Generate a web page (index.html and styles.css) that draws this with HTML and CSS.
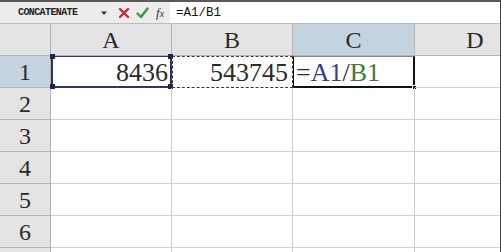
FILE: index.html
```html
<!DOCTYPE html>
<html>
<head>
<meta charset="utf-8">
<link rel="stylesheet" href="styles.css">
</head>
<body>
<div class="app">
  <div class="fbar">
    <div class="namebox">CONCATENATE</div>
    <div class="tools">
      <svg class="ico drop" width="8" height="6" viewBox="0 0 8 6"><path d="M1 1.5h6L4 5z" fill="#333"/></svg>
      <svg class="ico" width="12" height="12" viewBox="0 0 12 12"><path d="M2 2L10 10M10 2L2 10" stroke="#c8282d" stroke-width="2.4" stroke-linecap="round"/></svg>
      <svg class="ico" width="13" height="12" viewBox="0 0 13 12"><path d="M1.5 6.5L5 10L11.5 1.5" fill="none" stroke="#3a9a3a" stroke-width="2.4" stroke-linecap="round" stroke-linejoin="round"/></svg>
      <span class="fx">f<span class="x">x</span></span>
    </div>
    <div class="input">=A1/B1</div>
  </div>
  <div class="grid">
    <div class="corner"></div>
    <div class="ch">A</div>
    <div class="ch">B</div>
    <div class="ch sel">C</div>
    <div class="ch">D</div>

    <div class="rh sel">1</div>
    <div class="cell num refa">8436<i class="h tl"></i><i class="h tr"></i><i class="h bl"></i><i class="h br"></i></div>
    <div class="cell num refb">543745</div>
    <div class="cell active"><span class="tx">=</span><span class="ra">A1</span><span class="tx">/</span><span class="rb">B1</span><i class="fill"></i></div>
    <div class="cell"></div>

    <div class="rh">2</div><div class="cell"></div><div class="cell"></div><div class="cell"></div><div class="cell"></div>
    <div class="rh">3</div><div class="cell"></div><div class="cell"></div><div class="cell"></div><div class="cell"></div>
    <div class="rh">4</div><div class="cell"></div><div class="cell"></div><div class="cell"></div><div class="cell"></div>
    <div class="rh">5</div><div class="cell"></div><div class="cell"></div><div class="cell"></div><div class="cell"></div>
    <div class="rh">6</div><div class="cell"></div><div class="cell"></div><div class="cell"></div><div class="cell"></div>
    <div class="rh"></div><div class="cell"></div><div class="cell"></div><div class="cell"></div><div class="cell"></div>
  </div>
</div>
</body>
</html>
```
FILE: styles.css
```css
* { box-sizing: border-box; }
html, body { margin: 0; padding: 0; background: #fff; }
body { width: 501px; height: 252px; overflow: hidden; }
.app {
  width: 501px; height: 252px; overflow: hidden;
  border-right: 1px solid #444;
}
.fbar {
  height: 24px;
  display: flex;
  align-items: stretch;
  background: #ececec;
  border-top: 2px solid #5a5a5a;
  border-bottom: 1px solid #bdbdbd;
}
.namebox {
  width: 96px;
  padding-left: 18px;
  font-family: "Liberation Mono", monospace;
  font-size: 10px;
  font-weight: bold;
  letter-spacing: -0.6px;
  color: #222;
  display: flex; align-items: center;
}
.tools {
  width: 74px;
  display: flex; align-items: center;
  gap: 6px;
  padding-left: 4px;
}
.ico { display: block; }
.drop { margin-right: 4px; }
.fx {
  font-family: "Liberation Serif", serif;
  font-style: italic;
  font-size: 13px;
  color: #333;
  margin-left: 1px;
}
.fx .x { font-size: 10px; }
.input {
  flex: 1;
  background: #fff;
  font-family: "Liberation Mono", monospace;
  font-size: 12.5px;
  color: #111;
  padding-left: 6px;
  display: flex; align-items: center;
}
.grid {
  display: grid;
  grid-template-columns: 51px 121px 121px 122px 121px;
  grid-template-rows: repeat(7, 32px) 8px;
  font-family: "Liberation Serif", serif;
}
.corner, .ch, .rh {
  background: #e4e4e4;
  border-right: 1px solid #b4b4b4;
  border-bottom: 1px solid #b4b4b4;
  color: #2a2a2a;
  display: flex; align-items: center; justify-content: center;
  font-size: 24px;
  padding-top: 2px;
}
.ch.sel, .rh.sel { background: #c4d4df; }
.cell {
  position: relative;
  border-right: 1px solid #cfcfcf;
  border-bottom: 1px solid #cfcfcf;
  display: flex; align-items: center;
  font-size: 26px;
  color: #2a2a2a;
  padding: 2px 4px 0 3px;
}
.num { justify-content: flex-end; }
.refa {
  border: 2px solid #2d3560;
  border-top-width: 1px;
  padding-right: 2px;
}
.h {
  position: absolute;
  width: 5px; height: 5px;
  background: #1d2550;
}
.tl { left: -3px; top: -3px; }
.tr { right: -3px; top: -3px; }
.bl { left: -3px; bottom: -3px; }
.br { right: -3px; bottom: -3px; }
.refb {
  border: 1px dashed #3a3a3a;
  padding-right: 4px;
}
.active {
  border: 2px solid #111;
  border-left: 1px solid #111;
  border-top: 1px solid #888;
  padding-left: 2px;
}
.tx { color: #2a2a3a; }
.ra { color: #3b3b8a; }
.rb { color: #3f7a3f; }
.fill {
  position: absolute;
  right: -4px; bottom: -4px;
  width: 5px; height: 5px;
  background: #111;
  border: 1px solid #fff;
}
```
